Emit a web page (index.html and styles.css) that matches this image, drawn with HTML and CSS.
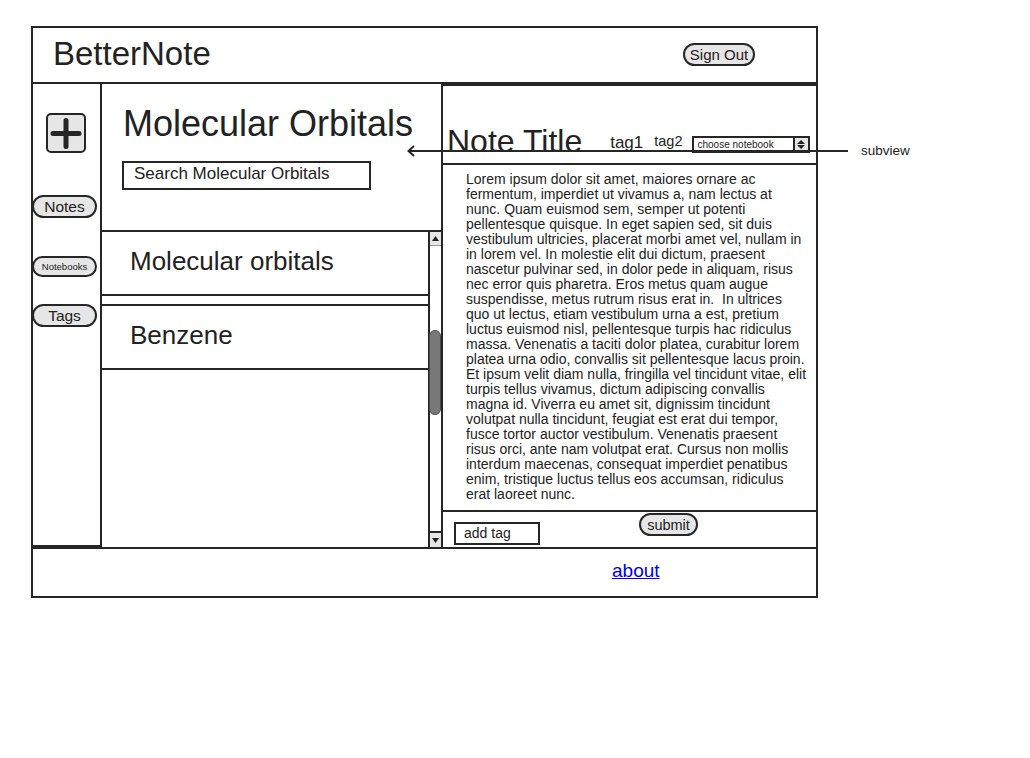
FILE: index.html
```html
<!DOCTYPE html>
<html lang="en">
<head>
<meta charset="utf-8">
<title>BetterNote</title>
<link rel="stylesheet" href="styles.css">
</head>
<body>
<div class="page">
  <header class="topbar">
    <div class="brand">BetterNote</div>
    <div class="pill pill-signout">Sign Out</div>
  </header>

  <main class="main">
    <nav class="sidebar">
      <div class="add-btn">
        <svg width="36" height="36" viewBox="0 0 36 36" aria-hidden="true">
          <path d="M5 18.5H31M18 5.5V31.5" stroke="#262626" stroke-width="5" stroke-linecap="round" fill="none"/>
        </svg>
      </div>
      <div class="pill pill-notes">Notes</div>
      <div class="pill pill-notebooks">Notebooks</div>
      <div class="pill pill-tags">Tags</div>
    </nav>

    <section class="notelist">
      <div class="nl-head">
        <h1 class="nl-title">Molecular Orbitals</h1>
        <div class="search">Search Molecular Orbitals</div>
      </div>
      <div class="nl-body">
        <div class="nl-items">
          <div class="nl-item">Molecular orbitals</div>
          <div class="nl-item">Benzene</div>
        </div>
        <div class="scrollbar">
          <div class="sb-btn sb-up">
            <svg width="7" height="5" viewBox="0 0 7 5" aria-hidden="true"><path d="M3.5 0L7 5H0Z" fill="#222"/></svg>
          </div>
          <div class="sb-track"><div class="sb-thumb"></div></div>
          <div class="sb-btn sb-down">
            <svg width="7" height="5" viewBox="0 0 7 5" aria-hidden="true"><path d="M0 0H7L3.5 5Z" fill="#222"/></svg>
          </div>
        </div>
      </div>
    </section>

    <section class="note">
      <div class="note-panel">
        <div class="note-head">
          <div class="note-title">Note Title</div>
          <span class="tag tag1">tag1</span>
          <span class="tag tag2">tag2</span>
          <div class="select">
            <span class="select-text">choose notebook</span>
            <span class="select-arrow">
              <svg width="8" height="9" viewBox="0 0 8 9" aria-hidden="true"><path d="M4 0L8 4H0Z M0 5H8L4 9Z" fill="#222"/></svg>
            </span>
          </div>
        </div>
        <p class="note-body">Lorem ipsum dolor sit amet, maiores ornare ac<br>fermentum, imperdiet ut vivamus a, nam lectus at<br>nunc. Quam euismod sem, semper ut potenti<br>pellentesque quisque. In eget sapien sed, sit duis<br>vestibulum ultricies, placerat morbi amet vel, nullam in<br>in lorem vel. In molestie elit dui dictum, praesent<br>nascetur pulvinar sed, in dolor pede in aliquam, risus<br>nec error quis pharetra. Eros metus quam augue<br>suspendisse, metus rutrum risus erat in.&nbsp; In ultrices<br>quo ut lectus, etiam vestibulum urna a est, pretium<br>luctus euismod nisl, pellentesque turpis hac ridiculus<br>massa. Venenatis a taciti dolor platea, curabitur lorem<br>platea urna odio, convallis sit pellentesque lacus proin.<br>Et ipsum velit diam nulla, fringilla vel tincidunt vitae, elit<br>turpis tellus vivamus, dictum adipiscing convallis<br>magna id. Viverra eu amet sit, dignissim tincidunt<br>volutpat nulla tincidunt, feugiat est erat dui tempor,<br>fusce tortor auctor vestibulum. Venenatis praesent<br>risus orci, ante nam volutpat erat. Cursus non mollis<br>interdum maecenas, consequat imperdiet penatibus<br>enim, tristique luctus tellus eos accumsan, ridiculus<br>erat laoreet nunc.</p>
      </div>
      <div class="note-foot">
        <div class="tag-input">add tag</div>
        <div class="pill pill-submit">submit</div>
      </div>
    </section>
  </main>

  <footer class="footer"><a class="about" href="#">about</a></footer>

  <svg class="annot-arrow" width="442" height="13" viewBox="0 0 442 13" aria-hidden="true">
    <path d="M1 6H441" stroke="#262626" stroke-width="2" fill="none"/>
    <path d="M7 1L1.5 6L7 11" stroke="#262626" stroke-width="2" fill="none"/>
  </svg>
  <div class="annot-label">subview</div>
</div>
</body>
</html>
```

FILE: styles.css
```css
* {
  box-sizing: border-box;
}

html, body {
  margin: 0;
  padding: 0;
  background: #ffffff;
}

body {
  font-family: "Liberation Sans", Arial, Helvetica, sans-serif;
  color: #222222;
}

.page {
  position: relative;
  width: 787px;
  margin: 26px 0 0 31px;
}

/* ---------- header ---------- */
.topbar {
  height: 58px;
  border: 2px solid #262626;
  display: flex;
  align-items: flex-start;
  padding: 0 61px 0 20px;
}

.brand {
  font-size: 33px;
  line-height: 36px;
  margin-top: 8px;
  color: #222;
}

.pill {
  border: 2px solid #262626;
  border-radius: 12px;
  background: #e6e6e6;
  display: flex;
  align-items: center;
  justify-content: center;
  color: #222;
  white-space: nowrap;
}

.pill-signout {
  margin-left: auto;
  margin-top: 15px;
  width: 72px;
  height: 23px;
  font-size: 15px;
}

/* ---------- main row ---------- */
.main {
  display: flex;
  height: 463px;
}

.sidebar {
  width: 71px;
  flex: none;
  border-left: 2px solid #262626;
  border-right: 2px solid #262626;
  border-bottom: 2px solid #262626;
  padding-top: 29px;
  display: flex;
  flex-direction: column;
  align-items: flex-start;
}

.add-btn {
  width: 40px;
  height: 40px;
  margin-left: 13px;
  border: 2px solid #262626;
  border-radius: 5px;
  background: #e6e6e6;
  display: flex;
  align-items: center;
  justify-content: center;
}

.add-btn svg {
  display: block;
}

.pill-notes,
.pill-notebooks,
.pill-tags {
  width: 65px;
  margin-left: -1px;
}

.pill-notes {
  margin-top: 42px;
  height: 23px;
  font-size: 15.5px;
}

.pill-notebooks {
  margin-top: 38px;
  height: 21px;
  font-size: 9.5px;
}

.pill-tags {
  margin-top: 27px;
  height: 23px;
  font-size: 15.5px;
}

/* ---------- note list column ---------- */
.notelist {
  width: 339px;
  flex: none;
  display: flex;
  flex-direction: column;
}

.nl-head {
  height: 146px;
  padding-top: 20px;
}

.nl-title {
  margin: 0 0 0 21px;
  font-size: 36px;
  line-height: 40px;
  font-weight: normal;
  color: #222;
  white-space: nowrap;
}

.search {
  margin: 17px 0 0 20px;
  width: 249px;
  height: 29px;
  border: 2px solid #262626;
  padding: 1px 0 0 10px;
  font-size: 17px;
  line-height: 19px;
  color: #222;
  white-space: nowrap;
}

.nl-body {
  flex: 1;
  display: flex;
}

.nl-items {
  width: 326px;
  flex: none;
}

.nl-item {
  height: 66px;
  border-top: 2px solid #262626;
  border-bottom: 2px solid #262626;
  padding-left: 28px;
  font-size: 26px;
  line-height: 58px;
  color: #222;
  white-space: nowrap;
}

.nl-item + .nl-item {
  margin-top: 8px;
}

.scrollbar {
  width: 13px;
  flex: none;
  border-left: 2px solid #262626;
  border-top: 2px solid #262626;
  display: flex;
  flex-direction: column;
}

.sb-btn {
  background: #e6e6e6;
  display: flex;
  align-items: center;
  justify-content: center;
}

.sb-btn svg {
  display: block;
}

.sb-up {
  height: 14px;
  border-bottom: 1px solid #9a9a9a;
}

.sb-track {
  flex: 1;
}

.sb-thumb {
  margin-top: 84px;
  height: 85px;
  width: 12px;
  margin-left: -1px;
  background: #787878;
  border: 1px solid #4a4a4a;
  border-radius: 6px;
}

.sb-down {
  height: 16px;
  border-top: 2px solid #262626;
}

/* ---------- note column ---------- */
.note {
  width: 377px;
  flex: none;
  display: flex;
  flex-direction: column;
}

.note-panel {
  height: 428px;
  border: 2px solid #262626;
}

.note-head {
  height: 79px;
  border-bottom: 2px solid #262626;
  display: flex;
  align-items: flex-end;
  padding: 0 0 4px 4px;
}

.note-title {
  font-size: 32px;
  line-height: 36px;
  color: #222;
  white-space: nowrap;
}

.tag {
  color: #222;
  white-space: nowrap;
}

.tag1 {
  margin-left: 28px;
  margin-bottom: 6px;
  font-size: 17px;
  line-height: 20px;
}

.tag2 {
  margin-left: 11px;
  margin-bottom: 9px;
  font-size: 14.5px;
  line-height: 18px;
}

.select {
  margin-left: 9px;
  margin-bottom: 6px;
  width: 118px;
  height: 17px;
  border: 2px solid #262626;
  display: flex;
  align-items: stretch;
  background: #fff;
}

.select-text {
  flex: 1;
  padding-left: 4px;
  font-size: 10px;
  line-height: 13px;
  color: #222;
  white-space: nowrap;
}

.select-arrow {
  width: 15px;
  border-left: 2px solid #262626;
  background: #e6e6e6;
  display: flex;
  align-items: center;
  justify-content: center;
}

.select-arrow svg {
  display: block;
}

.note-body {
  margin: 0;
  padding: 7px 0 0 23px;
  font-size: 14px;
  line-height: 15px;
  color: #222;
  white-space: nowrap;
}

.note-foot {
  flex: 1;
  border-left: 2px solid #262626;
  border-right: 2px solid #262626;
  display: flex;
  align-items: flex-start;
}

.tag-input {
  margin: 10px 0 0 11px;
  width: 86px;
  height: 23px;
  border: 2px solid #262626;
  padding-left: 8px;
  font-size: 14px;
  line-height: 19px;
  color: #222;
  white-space: nowrap;
}

.pill-submit {
  margin: 1px 0 0 99px;
  width: 59px;
  height: 23px;
  font-size: 14.5px;
}

/* ---------- footer ---------- */
.footer {
  height: 51px;
  border: 2px solid #262626;
  padding: 11px 0 0 579px;
  font-size: 19px;
  line-height: 22px;
}

.about {
  color: #0000ee;
  text-decoration: underline;
}

/* ---------- annotation overlay ---------- */
.annot-arrow {
  position: absolute;
  left: 376px;
  top: 119px;
  display: block;
}

.annot-label {
  position: absolute;
  left: 830px;
  top: 117px;
  font-size: 13.5px;
  line-height: 16px;
  color: #222;
  white-space: nowrap;
}
```
